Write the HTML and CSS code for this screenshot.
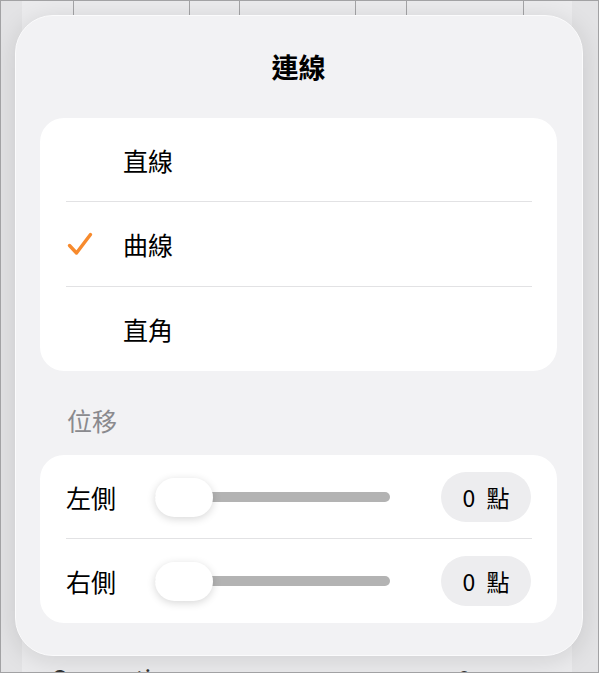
FILE: index.html
```html
<!DOCTYPE html>
<html>
<head>
  <title>連線</title>
  <link rel="stylesheet" href="styles.css">
</head>
<body>
  <div class="frame">
    <div class="sheet">
      <div class="table-row">
        <span class="cell" style="width: 50px"></span>
        <span class="cell" style="width: 115px"></span>
        <span class="cell" style="width: 49px"></span>
        <span class="cell" style="width: 115px"></span>
        <span class="cell" style="width: 50px"></span>
        <span class="cell" style="width: 116px"></span>
        <span class="cell last"></span>
      </div>
      <div class="under-row">
        <span class="under-label">Connection</span>
        <span class="under-value">0</span>
        <span class="under-chevron">›</span>
      </div>
    </div>

    <div class="popover">
      <h1 class="title">連線</h1>

      <ul class="card options">
        <li class="option"><span class="check"></span><span>直線</span></li>
        <li class="sep"></li>
        <li class="option selected">
          <span class="check">
            <svg width="26" height="24" viewBox="0 0 26 24">
              <path d="M2.5 13.5 L9.5 21 L23.5 2.5" fill="none" stroke="#f78a2d" stroke-width="3.4" stroke-linecap="round" stroke-linejoin="round"/>
            </svg>
          </span>
          <span>曲線</span>
        </li>
        <li class="sep"></li>
        <li class="option"><span class="check"></span><span>直角</span></li>
      </ul>

      <h2 class="section-label">位移</h2>

      <ul class="card offsets">
        <li class="offset-row">
          <span class="offset-label">左側</span>
          <div class="slider">
            <div class="track"></div>
            <div class="thumb"></div>
          </div>
          <span class="value-pill"><span class="num">0</span>點</span>
        </li>
        <li class="sep"></li>
        <li class="offset-row">
          <span class="offset-label">右側</span>
          <div class="slider">
            <div class="track"></div>
            <div class="thumb"></div>
          </div>
          <span class="value-pill"><span class="num">0</span>點</span>
        </li>
      </ul>
    </div>
  </div>
</body>
</html>
```

FILE: styles.css
```css
body, h1, h2, p, ul, li {
    margin: 0;
    padding: 0;
  }

  body {
    font-family: "Noto Sans CJK TC", "Noto Sans", sans-serif;
    background-color: #e3e3e5;
    color: #000;
  }

  ul {
    list-style: none;
  }

  .frame {
    position: relative;
    width: 599px;
    height: 673px;
    box-sizing: border-box;
    border: 1px solid #a2a2a4;
    background-color: #e3e3e5;
    padding: 0 26px 0 21px;
    overflow: hidden;
  }

  .sheet {
    height: 100%;
    background-color: #ebebed;
    display: flex;
    flex-direction: column;
    justify-content: space-between;
  }

  .table-row {
    display: flex;
    height: 15px;
    padding-left: 1px;
  }

  .cell {
    border-right: 1px solid #a4a4a6;
    flex-shrink: 0;
  }

  .cell.last {
    border-right: none;
    flex: 1;
  }

  .under-row {
    display: flex;
    align-items: center;
    height: 30px;
    margin-bottom: -20px;
    padding: 0 30px 0 29px;
    font-size: 24px;
    color: #333;
  }

  .under-label {
    flex: 1;
  }

  .under-value {
    margin-right: 64px;
  }

  .under-chevron {
    color: #888;
  }

  .popover {
    position: absolute;
    left: 14px;
    top: 14px;
    width: 568px;
    height: 641px;
    box-sizing: border-box;
    padding: 0 25px 0 24px;
    border-radius: 38px;
    background-color: #f2f2f4;
    border: 1px solid #fbfbfc;
    box-shadow: 0 4px 26px rgba(0, 0, 0, 0.12);
  }

  .title {
    height: 102px;
    line-height: 102px;
    text-align: center;
    font-size: 27px;
    font-weight: 700;
  }

  .card {
    background-color: #fff;
    border-radius: 24px;
  }

  .sep {
    height: 1px;
    margin: 0 25px 0 26px;
    background-color: #e2e2e4;
  }

  .option {
    display: flex;
    align-items: center;
    height: 84px;
    padding-left: 27px;
    font-size: 25px;
  }

  .option:first-child {
    height: 82px;
    padding-top: 1px;
  }

  .check {
    width: 56px;
    height: 24px;
    display: flex;
    align-items: center;
  }

  .section-label {
    height: 84px;
    box-sizing: border-box;
    padding: 35px 0 0 27px;
    line-height: 28px;
    font-size: 25px;
    font-weight: 400;
    color: #8a8a8e;
  }

  .offset-row {
    display: flex;
    align-items: center;
    height: 83px;
    padding: 0 26px 0 26px;
    font-size: 25px;
  }

  .offset-row + .sep + .offset-row {
    height: 84px;
  }

  .offset-label {
    width: 89px;
    flex-shrink: 0;
  }

  .slider {
    position: relative;
    width: 235px;
    height: 40px;
    display: flex;
    align-items: center;
  }

  .track {
    width: 100%;
    height: 10px;
    border-radius: 5px;
    background-color: #b3b3b3;
  }

  .thumb {
    position: absolute;
    left: 0;
    top: 1px;
    width: 58px;
    height: 39px;
    border-radius: 20px;
    background-color: #fff;
    box-shadow: 0 2px 9px rgba(0, 0, 0, 0.16);
  }

  .value-pill {
    margin-left: auto;
    width: 90px;
    height: 50px;
    border-radius: 25px;
    background-color: #ededef;
    display: flex;
    align-items: center;
    justify-content: center;
    font-size: 23px;
  }

  .num {
    margin-right: 11px;
  }
```
